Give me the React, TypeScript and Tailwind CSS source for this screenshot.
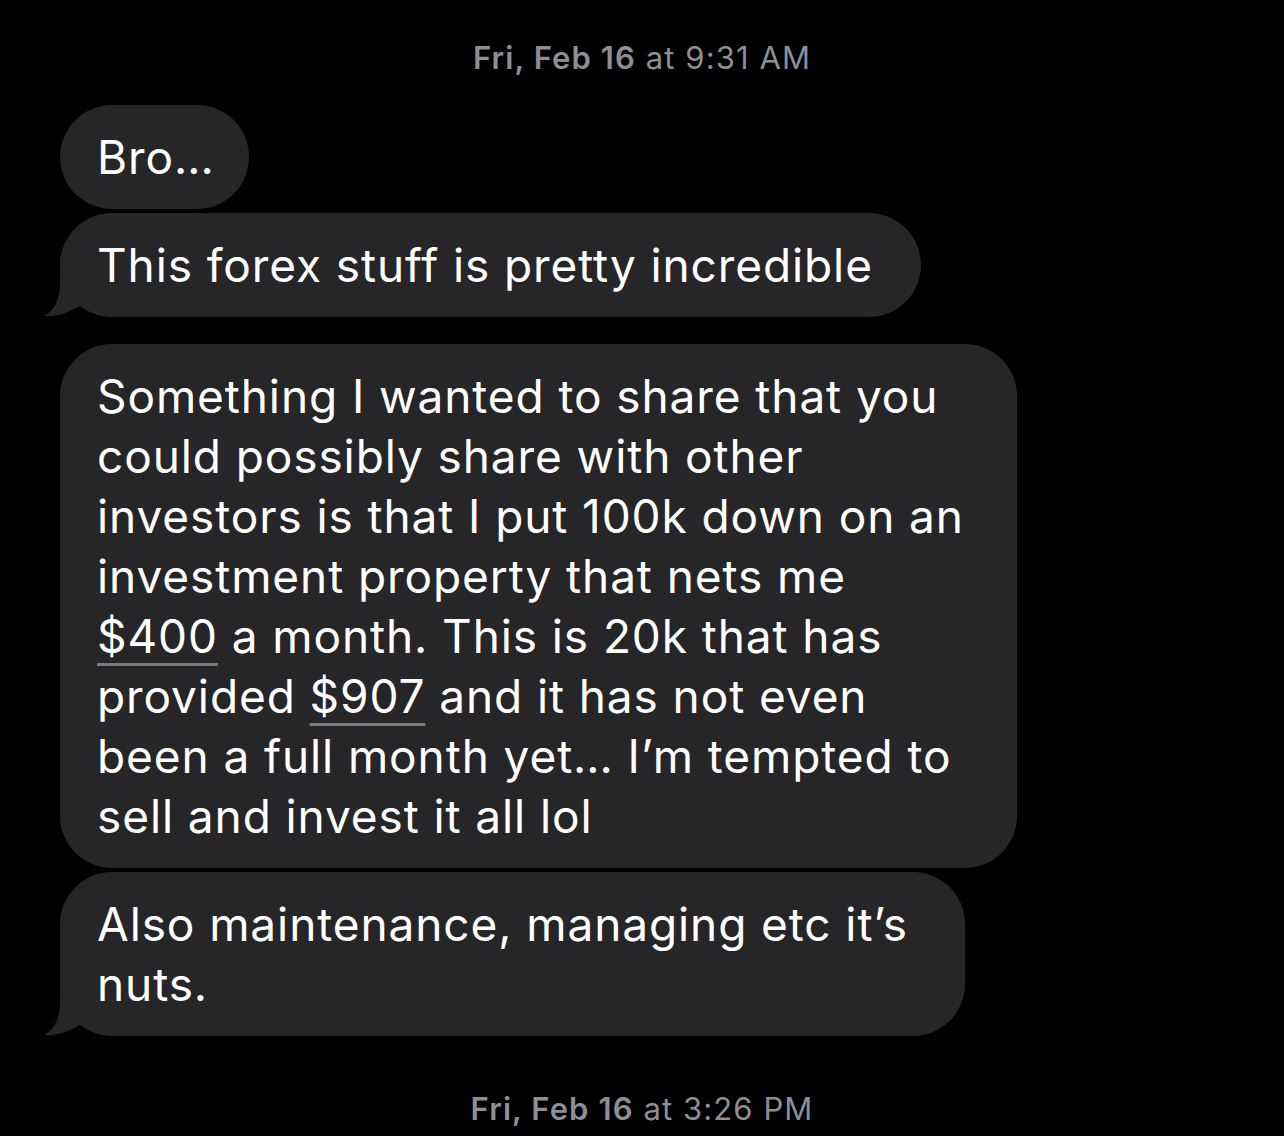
import React from "react";

function Tail() {
  return (
    <svg
      className="absolute left-[-16px] bottom-0 w-[40px] h-[60px]"
      viewBox="0 0 40 60"
      fill="#262628"
    >
      <path d="M16 0 L16 27 C16 42 10 54 0 59 C14 60 26 55 38 48 L38 0 Z" />
    </svg>
  );
}

function Bubble({
  width,
  tail,
  children,
}: {
  width: string;
  tail?: boolean;
  children: React.ReactNode;
}) {
  return (
    <div className={`relative ${width}`}>
      {tail && <Tail />}
      <div className="relative bg-[#262628] rounded-[52px] px-[37px] py-[22px] text-white text-[46px] leading-[60px] tracking-[0.9px] whitespace-nowrap">
        {children}
      </div>
    </div>
  );
}

function Stamp({ day, time }: { day: string; time: string }) {
  return (
    <div className="h-[36px] flex items-center justify-center text-[31px] leading-[36px] text-[#8e8e93] tracking-[1.1px]">
      <span className="font-semibold">{day}</span>
      <span>&nbsp;at {time}</span>
    </div>
  );
}

const Money = ({ children }: { children: React.ReactNode }) => (
  <span className="inline-block pr-[5px] -mr-[5px] underline decoration-[#7a7a80] decoration-[3px] underline-offset-[10px]">
    {children}
  </span>
);

export default function App() {
  return (
    <div
      className="w-[1284px] h-[1136px] bg-black overflow-hidden pt-[40px]"
      style={{ fontFamily: "Inter, 'Noto Sans', sans-serif" }}
    >
      <Stamp day="Fri, Feb 16" time="9:31 AM" />

      <div className="pl-[60px] mt-[29px] flex flex-col items-start">
        <Bubble width="w-[189px]">Bro…</Bubble>
        <div className="mt-[4px]">
          <Bubble width="w-[861px]" tail>
            This forex stuff is pretty incredible
          </Bubble>
        </div>

        <div className="mt-[27px]">
          <Bubble width="w-[957px]">
            Something I wanted to share that you
            <br />
            could possibly share with other
            <br />
            investors is that I put 100k down on an
            <br />
            investment property that nets me
            <br />
            <Money>$400</Money> a month. This is 20k that has
            <br />
            provided <Money>$907</Money> and it has not even
            <br />
            been a full month yet… I’m tempted to
            <br />
            sell and invest it all lol
          </Bubble>
        </div>
        <div className="mt-[4px]">
          <Bubble width="w-[905px]" tail>
            Also maintenance, managing etc it’s
            <br />
            nuts.
          </Bubble>
        </div>
      </div>

      <div className="mt-[55px]">
        <Stamp day="Fri, Feb 16" time="3:26 PM" />
      </div>
    </div>
  );
}
